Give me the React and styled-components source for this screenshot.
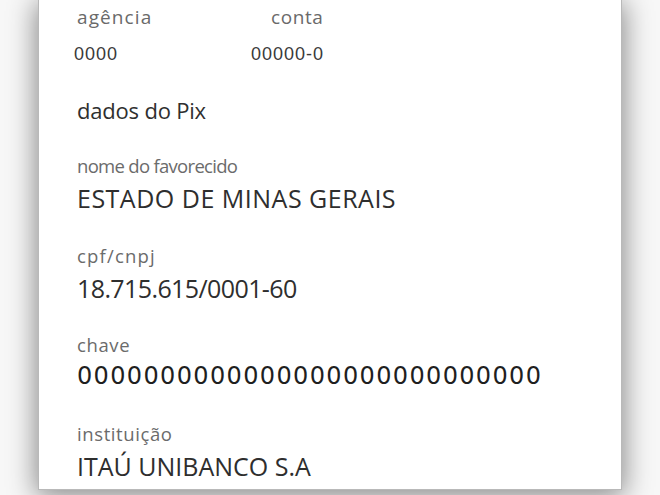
import React from 'react'
import styled, { createGlobalStyle } from 'styled-components'

const GlobalStyle = createGlobalStyle`
  html, body {
    margin: 0;
    padding: 0;
    background: #f7f7f7;
    overflow: hidden;
  }
`

const Page = styled.div`
  width: 660px;
  height: 495px;
  padding: 0 38px 5px;
  box-sizing: border-box;
  display: flex;
  align-items: flex-end;
`

const Card = styled.div`
  width: 100%;
  height: 490px;
  box-sizing: border-box;
  background: #fff;
  border: 1px solid #b9b9b9;
  border-top: none;
  box-shadow: 0 4px 26px 2px rgba(0, 0, 0, 0.45);
  padding: 5px 0 0 38px;
  display: flex;
  flex-direction: column;
  font-family: 'Open Sans', 'Noto Sans', sans-serif;
`

const AccountRow = styled.div`
  display: flex;
`

const AccountCol = styled.div`
  display: flex;
  flex-direction: column;
  width: ${props => props.width || 'auto'};
`

const SmallLabel = styled.span`
  font-size: 19px;
  line-height: 24px;
  color: #6a6a6a;
  letter-spacing: ${props => props.spacing || '1.1px'};
  margin-left: ${props => props.indent || '0'};
`

const SmallValue = styled.span`
  font-family: 'Liberation Sans', Arial, sans-serif;
  font-size: 18px;
  line-height: 24px;
  color: #3a3a3a;
  letter-spacing: 1px;
  margin-top: 13px;
  margin-left: ${props => props.indent || '0'};
`

const SectionTitle = styled.h3`
  margin: 30px 0 0;
  font-weight: 400;
  font-size: 22px;
  line-height: 28px;
  color: #2f2f2f;
  letter-spacing: -0.2px;
`

const Field = styled.div`
  display: flex;
  flex-direction: column;
  margin-top: ${props => props.top || '29.5px'};
`

const Label = styled.span`
  font-size: 18.5px;
  line-height: 24px;
  color: #6b6b6b;
  letter-spacing: ${props => props.spacing || '0.6px'};
`

const Value = styled.span`
  font-size: 25px;
  line-height: 32px;
  color: #2e2e2e;
  letter-spacing: ${props => props.spacing || '0'};
  margin-top: 4px;
`

const KeyValue = styled.span`
  font-family: 'DejaVu Sans', sans-serif;
  font-size: 24px;
  line-height: 32px;
  color: #1f1f1f;
  letter-spacing: 1.35px;
  margin-top: 3px;
`

export default function App() {
  return (
    <>
      <GlobalStyle />
      <Page>
        <Card>
          <AccountRow>
            <AccountCol width="174px">
              <SmallLabel>agência</SmallLabel>
              <SmallValue indent="-3px">0000</SmallValue>
            </AccountCol>
            <AccountCol>
              <SmallLabel indent="20px" spacing="0.6px">conta</SmallLabel>
              <SmallValue>00000-0</SmallValue>
            </AccountCol>
          </AccountRow>

          <SectionTitle>dados do Pix</SectionTitle>

          <Field top="30px">
            <Label spacing="-0.7px">nome do favorecido</Label>
            <Value spacing="0.5px">ESTADO DE MINAS GERAIS</Value>
          </Field>

          <Field>
            <Label spacing="1.2px">cpf/cnpj</Label>
            <Value spacing="-0.6px">18.715.615/0001-60</Value>
          </Field>

          <Field>
            <Label>chave</Label>
            <KeyValue>0000000000000000000000000000</KeyValue>
          </Field>

          <Field>
            <Label>instituição</Label>
            <Value>ITAÚ UNIBANCO S.A</Value>
          </Field>
        </Card>
      </Page>
    </>
  )
}
